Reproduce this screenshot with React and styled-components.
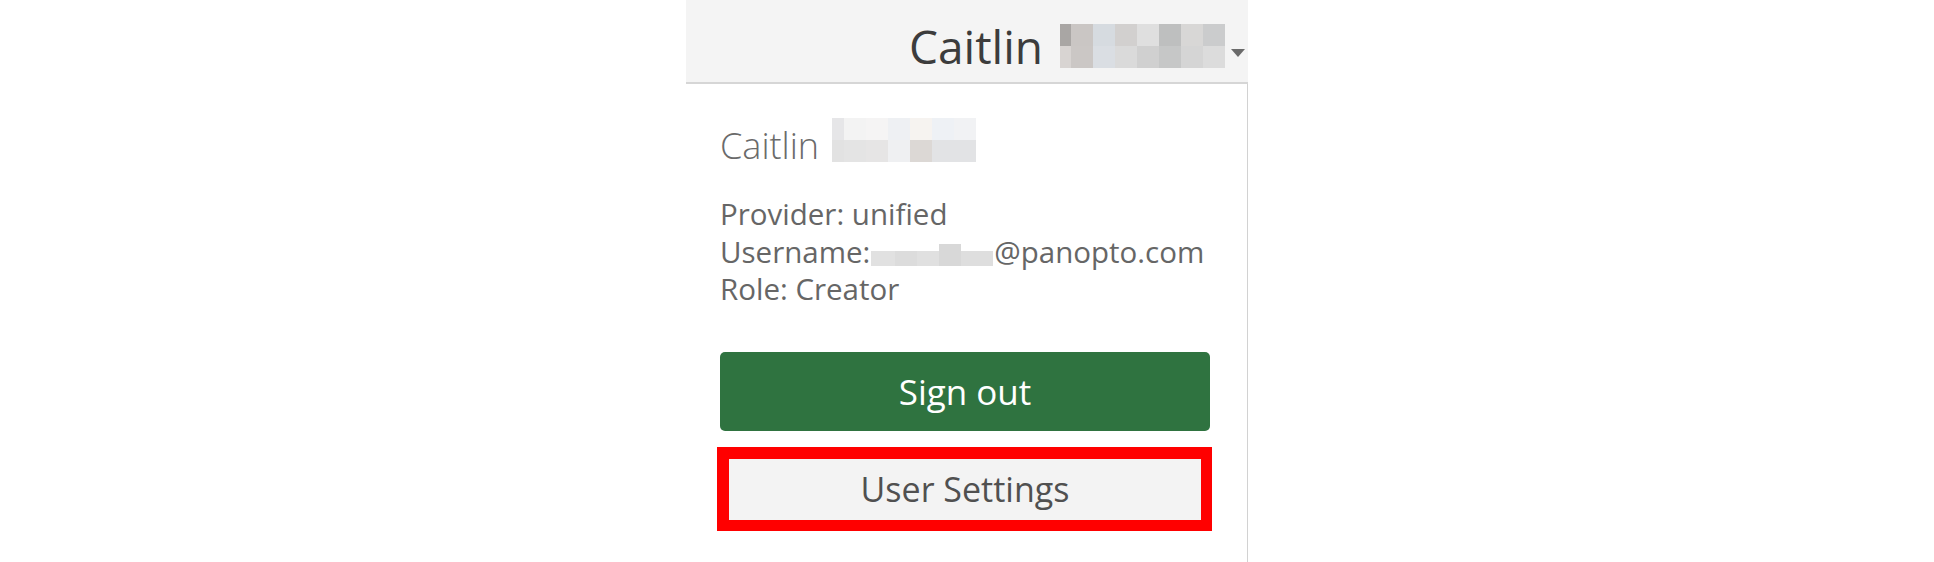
import React from "react";
import styled, { createGlobalStyle } from "styled-components";

const GlobalStyle = createGlobalStyle`
  html, body { margin: 0; padding: 0; background: #ffffff; }
  body { font-family: "Open Sans", "Noto Sans", "Liberation Sans", sans-serif; }
`;

const Page = styled.div`
  display: flex;
  justify-content: center;
  width: 100%;
  min-height: 562px;
`;

const Panel = styled.div`
  width: 562px;
  display: flex;
  flex-direction: column;
`;

const Header = styled.header`
  box-sizing: border-box;
  height: 84px;
  background: #f4f4f4;
  border-bottom: 2px solid #d6d6d6;
  display: flex;
  justify-content: flex-end;
  align-items: flex-start;
  padding: 24px 3px 0 0;
`;

const HeaderName = styled.span`
  font-size: 46px;
  line-height: 44px;
  color: #3c3c3c;
  margin-right: 17px;
`;

const Caret = styled.span`
  width: 0;
  height: 0;
  margin: 25px 0 0 6px;
  border-left: 7px solid transparent;
  border-right: 7px solid transparent;
  border-top: 8px solid #6a6a6a;
`;

const Pixelated = styled.div`
  display: grid;
  grid-template-columns: ${(p) => p.$first}px repeat(${(p) => p.$cols - 1}, ${(p) => p.$size}px);
  grid-auto-rows: ${(p) => p.$size}px;
`;

const Cell = styled.span`
  background: ${(p) => p.$color};
`;

const Body = styled.div`
  flex: 1;
  box-sizing: border-box;
  border-right: 1px solid #d2d2d2;
  padding: 34px 37px 32px 34px;
  display: flex;
  flex-direction: column;
`;

const NameRow = styled.div`
  display: flex;
  align-items: flex-start;
  gap: 13px;
`;

const NameText = styled.span`
  font-size: 36px;
  font-weight: 300;
  line-height: 44px;
  color: #6a6a6a;
  margin-top: 6px;
`;

const Details = styled.div`
  margin-top: 27px;
  font-size: 29.5px;
  line-height: 37.5px;
  color: #666666;
`;

const Line = styled.div`
  white-space: nowrap;
`;

const Redacted = styled.span`
  display: inline-flex;
  align-items: flex-end;
  vertical-align: -3px;
  height: 24px;
  margin: 0 1px;
`;

const RedactSeg = styled.span`
  width: ${(p) => p.$w}px;
  height: ${(p) => p.$h}px;
  background: ${(p) => p.$color};
`;

const SignOut = styled.button`
  margin-top: 44px;
  height: 79px;
  border: none;
  border-radius: 5px;
  background: #2f7340;
  color: #ffffff;
  font-family: inherit;
  font-size: 35px;
  cursor: pointer;
`;

const Highlight = styled.div`
  margin: 16px -2px 0 -3px;
  border: 12px solid #ff0000;
  border-right-width: 11px;
  border-bottom-width: 11px;
  display: flex;
`;

const SettingsButton = styled.button`
  flex: 1;
  height: 61px;
  border: none;
  background: #f3f3f3;
  color: #505050;
  font-family: inherit;
  font-size: 34px;
  cursor: pointer;
`;

const headerCells = [
  ["#a9a6a4", "#cac6c4", "#d6dbe0", "#d2d0cf", "#dfdfdf", "#bebfbf", "#d8d7d6", "#cbcccd"],
  ["#d8d4d2", "#cbc7c5", "#dadee3", "#dadada", "#d0d0d0", "#c6c7c7", "#d5d5d5", "#dcdcdc"],
];

const nameCells = [
  ["#e6e6e8", "#f3f3f3", "#f5f4f4", "#eef0f3", "#f6f3f0", "#eef1f5", "#f1f2f4"],
  ["#e2e2e2", "#e4e4e4", "#e6e5e5", "#eff0f2", "#dcd8d5", "#e2e3e5", "#e2e3e5"],
];

const userSegs = [
  { w: 24, h: 15, c: "#e1e1e1" },
  { w: 22, h: 15, c: "#dcdcdc" },
  { w: 22, h: 15, c: "#e0e0e0" },
  { w: 22, h: 22, c: "#d8d8d8" },
  { w: 32, h: 15, c: "#dedede" },
];

function PixelBlock({ cells, first, size }) {
  return (
    <Pixelated $cols={cells[0].length} $first={first} $size={size}>
      {cells.flatMap((row, r) =>
        row.map((c, i) => <Cell key={`${r}-${i}`} $color={c} />)
      )}
    </Pixelated>
  );
}

export default function App() {
  return (
    <>
      <GlobalStyle />
      <Page>
        <Panel>
          <Header>
            <HeaderName>Caitlin</HeaderName>
            <PixelBlock cells={headerCells} first={11} size={22} />
            <Caret />
          </Header>
          <Body>
            <NameRow>
              <NameText>Caitlin</NameText>
              <PixelBlock cells={nameCells} first={12} size={22} />
            </NameRow>
            <Details>
              <Line>Provider: unified</Line>
              <Line>
                Username:
                <Redacted>
                  {userSegs.map((s, i) => (
                    <RedactSeg key={i} $w={s.w} $h={s.h} $color={s.c} />
                  ))}
                </Redacted>
                @panopto.com
              </Line>
              <Line>Role: Creator</Line>
            </Details>
            <SignOut>Sign out</SignOut>
            <Highlight>
              <SettingsButton>User Settings</SettingsButton>
            </Highlight>
          </Body>
        </Panel>
      </Page>
    </>
  );
}
